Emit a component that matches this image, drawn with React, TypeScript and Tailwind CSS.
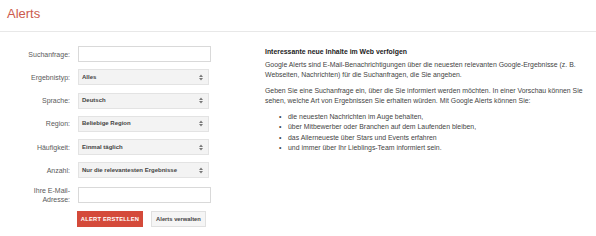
import React from "react";

type Row = {
  label: string[];
  kind: "input" | "select";
  value?: string;
};

const rows: Row[] = [
  { label: ["Suchanfrage:"], kind: "input" },
  { label: ["Ergebnistyp:"], kind: "select", value: "Alles" },
  { label: ["Sprache:"], kind: "select", value: "Deutsch" },
  { label: ["Region:"], kind: "select", value: "Beliebige Region" },
  { label: ["Häufigkeit:"], kind: "select", value: "Einmal täglich" },
  { label: ["Anzahl:"], kind: "select", value: "Nur die relevantesten Ergebnisse" },
  { label: ["Ihre E-Mail-", "Adresse:"], kind: "input" },
];

const bullets = [
  "die neuesten Nachrichten im Auge behalten,",
  "über Mitbewerber oder Branchen auf dem Laufenden bleiben,",
  "das Allerneueste über Stars und Events erfahren",
  "und immer über Ihr Lieblings-Team informiert sein.",
];

function SelectArrows() {
  return (
    <svg width="4" height="7" viewBox="0 0 4 7" className="shrink-0">
      <path d="M0 3 L2 0.5 L4 3 Z" fill="#777" />
      <path d="M0 4 L2 6.5 L4 4 Z" fill="#777" />
    </svg>
  );
}

function Field({ row }: { row: Row }) {
  if (row.kind === "input") {
    return <div className="h-[16px] w-[133px] border border-[#d9d9d9] bg-white" />;
  }
  return (
    <div className="flex h-[16px] w-[131px] items-center justify-between border border-[#e3e3e3] bg-[#f3f3f3] pl-[3px] pr-[5px]">
      <span className="text-[6px] font-bold text-[#444]">{row.value}</span>
      <SelectArrows />
    </div>
  );
}

export default function App() {
  return (
    <div
      className="h-[236px] w-[596px] overflow-hidden bg-white"
      style={{ fontFamily: '"Liberation Sans", Arial, sans-serif' }}
    >
      <div className="flex h-[32px] items-center border-b border-[#e8e8e8] px-[7px] pb-[4px]">
        <h1 className="text-[13px] leading-none text-[#cc5a4e]">Alerts</h1>
      </div>

      <div className="flex">
        <div className="flex w-[265px] flex-col gap-[7.3px] pt-[14px]">
          {rows.map((row) => (
            <div key={row.label.join("")} className="flex items-center gap-[8px]">
              <div className="w-[70px] text-right text-[7px] leading-[9px] text-[#5a5a5a]">
                {row.label.map((l) => (
                  <div key={l}>{l}</div>
                ))}
              </div>
              <Field row={row} />
            </div>
          ))}
          <div className="flex gap-[8px] pl-[77px]">
            <button className="h-[16px] w-[66px] bg-[#d44a3a] text-[5.8px] font-bold tracking-[0.2px] text-white">
              ALERT ERSTELLEN
            </button>
            <button className="h-[16px] w-[55px] border border-[#e0e0e0] bg-[#f5f5f5] text-[5.8px] font-bold text-[#444]">
              Alerts verwalten
            </button>
          </div>
        </div>

        <div className="w-[328px] pt-[15px] text-[6.9px] leading-[10.5px] text-[#444]">
          <h2 className="mb-[2px] font-bold text-[#222]">Interessante neue Inhalte im Web verfolgen</h2>
          <p className="mb-[5px]">
            Google Alerts sind E-Mail-Benachrichtigungen über die neuesten relevanten Google-Ergebnisse (z. B.
            Webseiten, Nachrichten) für die Suchanfragen, die Sie angeben.
          </p>
          <p className="mb-[5px]">
            Geben Sie eine Suchanfrage ein, über die Sie informiert werden möchten. In einer Vorschau können Sie
            sehen, welche Art von Ergebnissen Sie erhalten würden. Mit Google Alerts können Sie:
          </p>
          <ul className="pl-[14px]">
            {bullets.map((b) => (
              <li key={b} className="flex">
                <span className="w-[9px] shrink-0">•</span>
                <span>{b}</span>
              </li>
            ))}
          </ul>
        </div>
      </div>
    </div>
  );
}
